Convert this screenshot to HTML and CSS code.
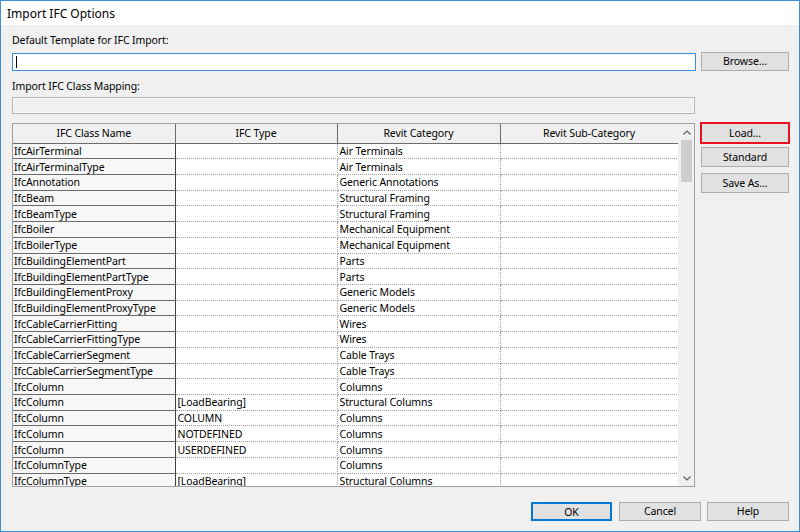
FILE: index.html
```html
<!DOCTYPE html>
<html>
<head>
<meta charset="utf-8">
<link rel="stylesheet" href="styles.css">
</head>
<body>
<div class="window">
  <div class="titlebar">Import IFC Options</div>
  <div class="content">
    <div class="label first">Default Template for IFC Import:</div>
    <div class="row">
      <div class="input focused"><span class="caret"></span></div>
      <button class="btn browse">Browse...</button>
    </div>
    <div class="label second">Import IFC Class Mapping:</div>
    <div class="row">
      <div class="input disabled"></div>
    </div>
    <div class="main">
      <div class="grid">
        <div class="table-wrap">
          <table>
            <colgroup><col class="c1"><col class="c2"><col class="c3"><col class="c4"></colgroup>
            <thead>
              <tr><th>IFC Class Name</th><th>IFC Type</th><th>Revit Category</th><th>Revit Sub-Category</th></tr>
            </thead>
            <tbody>
              <tr><td class="name">IfcAirTerminal</td><td></td><td>Air Terminals</td><td></td></tr>
              <tr><td class="name">IfcAirTerminalType</td><td></td><td>Air Terminals</td><td></td></tr>
              <tr><td class="name">IfcAnnotation</td><td></td><td>Generic Annotations</td><td></td></tr>
              <tr><td class="name">IfcBeam</td><td></td><td>Structural Framing</td><td></td></tr>
              <tr><td class="name">IfcBeamType</td><td></td><td>Structural Framing</td><td></td></tr>
              <tr><td class="name">IfcBoiler</td><td></td><td>Mechanical Equipment</td><td></td></tr>
              <tr><td class="name">IfcBoilerType</td><td></td><td>Mechanical Equipment</td><td></td></tr>
              <tr><td class="name">IfcBuildingElementPart</td><td></td><td>Parts</td><td></td></tr>
              <tr><td class="name">IfcBuildingElementPartType</td><td></td><td>Parts</td><td></td></tr>
              <tr><td class="name">IfcBuildingElementProxy</td><td></td><td>Generic Models</td><td></td></tr>
              <tr><td class="name">IfcBuildingElementProxyType</td><td></td><td>Generic Models</td><td></td></tr>
              <tr><td class="name">IfcCableCarrierFitting</td><td></td><td>Wires</td><td></td></tr>
              <tr><td class="name">IfcCableCarrierFittingType</td><td></td><td>Wires</td><td></td></tr>
              <tr><td class="name">IfcCableCarrierSegment</td><td></td><td>Cable Trays</td><td></td></tr>
              <tr><td class="name">IfcCableCarrierSegmentType</td><td></td><td>Cable Trays</td><td></td></tr>
              <tr><td class="name">IfcColumn</td><td></td><td>Columns</td><td></td></tr>
              <tr><td class="name">IfcColumn</td><td>[LoadBearing]</td><td>Structural Columns</td><td></td></tr>
              <tr><td class="name">IfcColumn</td><td>COLUMN</td><td>Columns</td><td></td></tr>
              <tr><td class="name">IfcColumn</td><td>NOTDEFINED</td><td>Columns</td><td></td></tr>
              <tr><td class="name">IfcColumn</td><td>USERDEFINED</td><td>Columns</td><td></td></tr>
              <tr><td class="name">IfcColumnType</td><td></td><td>Columns</td><td></td></tr>
              <tr><td class="name">IfcColumnType</td><td>[LoadBearing]</td><td>Structural Columns</td><td></td></tr>
            </tbody>
          </table>
        </div>
        <div class="scrollbar">
          <svg class="arrow" width="8" height="5" viewBox="0 0 8 5"><path d="M0.5 4.5 L4 1 L7.5 4.5" fill="none" stroke="#606060" stroke-width="1.2"/></svg>
          <div class="track"><div class="thumb"></div></div>
          <svg class="arrow" width="8" height="5" viewBox="0 0 8 5"><path d="M0.5 0.5 L4 4 L7.5 0.5" fill="none" stroke="#606060" stroke-width="1.2"/></svg>
        </div>
      </div>
      <div class="side">
        <button class="btn load">Load...</button>
        <button class="btn">Standard</button>
        <button class="btn">Save As...</button>
      </div>
    </div>
    <div class="footer">
      <button class="btn ok">OK</button>
      <button class="btn">Cancel</button>
      <button class="btn">Help</button>
    </div>
  </div>
</div>
</body>
</html>
```
FILE: styles.css
```css
* { box-sizing: border-box; }
html, body { margin: 0; padding: 0; }
body {
  font-family: "Noto Sans", "Open Sans", sans-serif;
  font-size: 10.5px;
  letter-spacing: -0.1px;
  color: #000;
  background: #f0f0f0;
}
.window {
  width: 800px;
  height: 532px;
  border: 1px solid #3c8ed7;
  background: #f0f0f0;
  display: flex;
  flex-direction: column;
}
.titlebar {
  height: 24px;
  background: #fff;
  font-size: 12px;
  letter-spacing: 0;
  line-height: 25px;
  padding-left: 6px;
  color: #000;
}
.content {
  flex: 1;
  padding: 0 10px 0 11px;
  display: flex;
  flex-direction: column;
}
.label {
  height: 14px;
  line-height: 14px;
}
.label.first { margin-top: 8px; margin-bottom: 5px; }
.label.second { margin-top: 8px; margin-bottom: 4px; }
.row {
  display: flex;
  align-items: center;
  gap: 5px;
}
.input {
  width: 684px;
  background: #fff;
  border: 1px solid #7a7a7a;
  position: relative;
}
.input.focused {
  height: 18px;
  border-color: #3c8ed7;
}
.caret {
  display: block;
  width: 1px;
  height: 12px;
  background: #000;
  margin: 2px 0 0 3px;
}
.input.disabled {
  width: 683px;
  height: 17px;
  background: #f0f0f0;
  border: 1px solid #b5b5b5;
  box-shadow: inset 0 0 0 1px #fafafa;
}
.btn {
  font-family: inherit;
  font-size: 10.5px;
  letter-spacing: -0.1px;
  color: #000;
  background: #e1e1e1;
  border: 1px solid #adadad;
  width: 88px;
  height: 20px;
  padding: 0;
  line-height: 17px;
}
.browse { height: 19px; }
.main {
  display: flex;
  margin-top: 9px;
  gap: 5px;
}
.grid {
  width: 683px;
  height: 364px;
  border: 1px solid #a0a0a0;
  display: flex;
  background: #fff;
}
.table-wrap {
  width: 665px;
  height: 100%;
  overflow: hidden;
}
table {
  table-layout: fixed;
  border-collapse: collapse;
  width: 665px;
}
col.c1 { width: 162px; }
col.c2 { width: 162px; }
col.c3 { width: 163px; }
col.c4 { width: 178px; }
th {
  height: 19px;
  font-weight: normal;
  background: #f0f0f0;
  border-right: 1px solid #6b6b6b;
  border-bottom: 1px solid #6b6b6b;
  padding: 0;
  text-align: center;
  white-space: nowrap;
}
td {
  height: 15.72px;
  padding: 0 0 0 2px;
  line-height: 14px;
  border-right: 1px dotted #a0a0a0;
  border-bottom: 1px dotted #a0a0a0;
  white-space: nowrap;
  overflow: hidden;
  background: #fff;
}
td.name {
  padding-left: 1px;
  background: #f7f7f7;
  border-right: 1px solid #404040;
  border-bottom: 1px solid #6b6b6b;
}
.scrollbar {
  width: 16px;
  background: #f0f0f0;
  display: flex;
  flex-direction: column;
  align-items: center;
  border-left: 1px solid #f0f0f0;
}
.arrow { margin: 6px 0 5px; flex: none; }
.track {
  flex: 1;
  width: 100%;
  padding: 0 2px;
}
.thumb {
  height: 42px;
  background: #cdcdcd;
}
.side {
  display: flex;
  flex-direction: column;
  gap: 6px;
  margin-top: -1px;
}
.side .btn { margin-left: 1px; height: 20px; }
.side .btn.load {
  margin-left: 0;
  width: 90px;
  height: 22px;
  border: 2px solid #e81123;
  margin-bottom: -3px;
}
.footer {
  display: flex;
  justify-content: flex-end;
  gap: 6px;
  margin-top: 15px;
}
.footer .btn { width: 82px; height: 19px; }
.footer .btn.ok {
  width: 81px;
  border: 2px solid #0078d7;
  margin-right: 1px;
}
```
